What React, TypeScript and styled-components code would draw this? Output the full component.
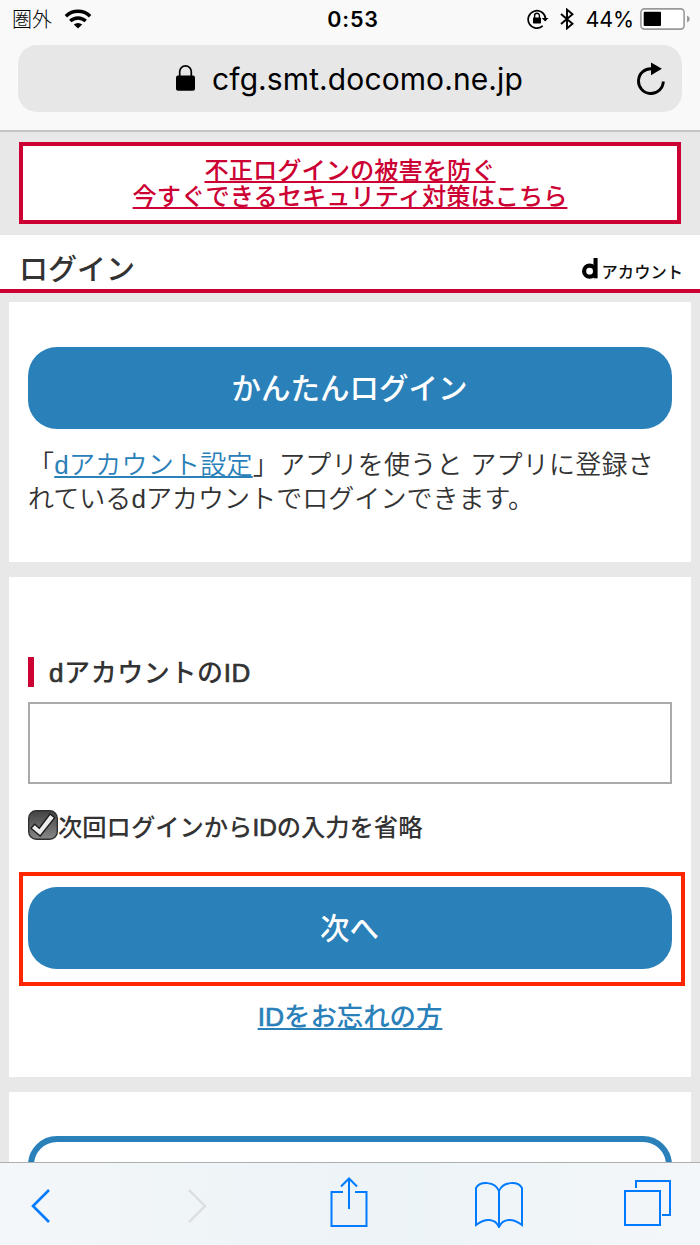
import React from 'react';
import styled, { createGlobalStyle } from 'styled-components';

const BLUE = '#2a80b9';
const CRIMSON = '#cc0033';
const IOS_BLUE = '#007aff';

const GlobalStyle = createGlobalStyle`
  * { box-sizing: border-box; }
  body {
    margin: 0;
    background: #e8e8e8;
    color: #333;
    font-family: 'Liberation Sans', 'Noto Sans CJK JP', sans-serif;
  }
`;

const Screen = styled.div`
  width: 700px;
  height: 1245px;
  display: flex;
  flex-direction: column;
  overflow: hidden;
`;

const BrowserTop = styled.header`
  flex: none;
  height: 132px;
  padding: 0 18px;
  background: #f9f9f9;
  border-bottom: 2px solid #c3c5c4;
`;

const StatusBar = styled.div`
  display: grid;
  grid-template-columns: 1fr auto 1fr;
  align-items: center;
  height: 38px;
  margin: 0 -8px 7px -6px;
  color: #000;
  font-family: Inter, 'Noto Sans CJK JP', sans-serif;
`;

const StatusGroup = styled.div<{ $end?: boolean }>`
  display: flex;
  align-items: center;
  justify-content: ${(p) => (p.$end ? 'flex-end' : 'flex-start')};
`;

const Carrier = styled.span`
  margin-right: 12px;
  font-family: 'Noto Sans CJK JP', sans-serif;
  font-size: 20px;
  font-weight: 300;
  line-height: 38px;
`;

const Clock = styled.time`
  font-size: 21.5px;
  font-weight: 600;
  letter-spacing: 0.8px;
  margin-left: 4px;
`;

const Percent = styled.span`
  margin: 0 6px 0 11px;
  font-size: 21.5px;
  letter-spacing: -0.1px;
`;

const AddressBar = styled.div`
  display: grid;
  grid-template-columns: 64px 1fr 64px;
  align-items: center;
  height: 67px;
  border-radius: 19px;
  background: #e7e7e7;
`;

const Address = styled.div`
  grid-column: 2;
  display: flex;
  align-items: center;
  justify-content: center;
  gap: 17px;
  padding-right: 1px;
  color: #000;
  font-family: Inter, sans-serif;
  font-size: 30px;
  white-space: nowrap;
`;

const Host = styled.span`
  letter-spacing: 0.1px;
`;

const ReloadButton = styled.button`
  justify-self: end;
  display: flex;
  margin-right: 17px;
  padding: 0;
  border: 0;
  background: none;
`;

const Page = styled.main`
  flex: 1;
  min-height: 0;
  overflow: hidden;
`;

const Notice = styled.a`
  display: block;
  height: 82px;
  margin: 10px 19px 11px;
  padding-top: 10px;
  border: 4px solid ${CRIMSON};
  background: #fff;
  color: ${CRIMSON};
  font-family: 'Noto Sans CJK JP', sans-serif;
  font-size: 24.25px;
  font-weight: 500;
  line-height: 26px;
  text-align: center;
  text-decoration: underline;
  text-decoration-thickness: 1.5px;
  text-underline-offset: 2px;
  text-decoration-skip-ink: none;
`;

const TitleBar = styled.div`
  display: flex;
  align-items: center;
  justify-content: space-between;
  height: 58px;
  padding: 9px 17px 0 19px;
  border-bottom: 4px solid ${CRIMSON};
  background: #fff;
`;

const Title = styled.h1`
  margin: 0;
  font-family: 'Noto Sans CJK JP', sans-serif;
  font-size: 29px;
  font-weight: 500;
  line-height: 44px;
`;

const Brand = styled.div`
  display: flex;
  align-items: flex-start;
  gap: 4px;
  margin-top: 9px;
  color: #111;
  font-family: 'Noto Sans CJK JP', sans-serif;
  font-size: 16.3px;
  font-weight: 500;
  line-height: 26px;
`;

const Cards = styled.div`
  padding-top: 9px;
`;

const Card = styled.section<{ $height: number; $top: number }>`
  height: ${(p) => p.$height}px;
  margin: 0 9px 15px;
  padding: ${(p) => p.$top}px 19px 0;
  background: #fff;
`;

const PrimaryButton = styled.button`
  display: flex;
  align-items: center;
  justify-content: center;
  width: 100%;
  height: 82px;
  padding: 0 1px 5px 0;
  border: 0;
  border-radius: 29px;
  background: ${BLUE};
  color: #fff;
  font-family: 'Noto Sans CJK JP', sans-serif;
  font-size: 29.5px;
  font-weight: 500;
`;

const OutlineButton = styled.button`
  display: block;
  width: 100%;
  height: 82px;
  border: 6px solid ${BLUE};
  border-radius: 29px;
  background: #fff;
`;

const Description = styled.p`
  margin: 20px 0 0;
  font-size: 26px;
  font-weight: 350;
  line-height: 33.5px;
  white-space: nowrap;
`;

const Line = styled.span<{ $tracking: number }>`
  display: block;
  letter-spacing: ${(p) => p.$tracking}px;
`;

const Latin = styled.span<{ $heavy?: boolean }>`
  font-family: 'Liberation Sans', sans-serif;
  font-weight: 400;
  -webkit-text-stroke: ${(p) => (p.$heavy ? '0.7px currentColor' : '0')};
`;

const TextLink = styled.a`
  color: ${BLUE};
  text-decoration: underline;
  text-decoration-thickness: 2px;
  text-underline-offset: 2px;
  text-decoration-skip-ink: none;
`;

const FieldLabel = styled.label`
  display: flex;
  align-items: center;
  height: 30px;
  padding: 0 0 4px 15px;
  border-left: 6px solid ${CRIMSON};
  font-size: 26px;
  font-weight: 500;
  letter-spacing: 0.6px;
  white-space: nowrap;
`;

const TextField = styled.input`
  display: block;
  width: 100%;
  height: 82px;
  margin: 15px 0 26px;
  padding: 0 16px;
  border: 2px solid #aaa;
  border-radius: 0;
  background: #fff;
  font-size: 25px;
  outline: none;
`;

const CheckRow = styled.label`
  display: flex;
  align-items: center;
  height: 30px;
  font-size: 24.3px;
  font-weight: 500;
  white-space: nowrap;
`;

const Highlight = styled.div`
  margin: 32px -13px 0 -9px;
  height: 114px;
  padding: 11px 9px 0 5px;
  border: 4px solid #ff2600;
`;

const Forgot = styled.div`
  margin-top: 11px;
  font-size: 26.4px;
  font-weight: 500;
  line-height: 40px;
  text-align: center;
`;

const Toolbar = styled.nav`
  flex: none;
  display: flex;
  align-items: flex-start;
  height: 83px;
  padding-left: 29px;
  border-top: 1px solid #adb0b2;
  background: linear-gradient(90deg, #f4f7fa, #eef4f7 35%, #edf4f7 60%, #f4f7fa);
`;

const ToolIcon = styled.svg<{ $muted?: boolean; $gap?: number; $top: number }>`
  display: block;
  flex: none;
  margin: ${(p) => p.$top}px 0 0 ${(p) => p.$gap ?? 0}px;
  fill: none;
  stroke: ${(p) => (p.$muted ? '#dcdddf' : IOS_BLUE)};
  stroke-width: ${(p) => (p.$muted ? 2.4 : 2)};
`;

const WifiIcon = () => (
  <svg width="28" height="20" viewBox="0 0 28 20">
    <g fill="none" stroke="#000" strokeWidth="3.5">
      <path d="M1.9 7.2A17.5 17.5 0 0 1 26.1 7.2" />
      <path d="M6.3 12A11.2 11.2 0 0 1 21.7 12" />
    </g>
    <path d="M9.8 15.6A6 6 0 0 1 18.2 15.6L14 19.4Z" />
  </svg>
);

const RotationLockIcon = () => (
  <svg width="22" height="20" viewBox="0 0 22 20">
    <path d="M15.7 16.9A8.7 8.7 0 1 1 18.5 9.4" fill="none" stroke="#000" strokeWidth="1.7" />
    <path d="M14.7 9H21.5L18.2 12.6Z" />
    <rect x="6" y="8.5" width="8" height="6" rx=".7" />
    <path d="M7.6 9V6.7a2.4 2.4 0 0 1 4.8 0V9" fill="none" stroke="#000" strokeWidth="1.4" />
  </svg>
);

const BluetoothIcon = () => (
  <svg width="14" height="22" viewBox="0 0 14 22" style={{ marginLeft: 11 }}>
    <path d="M1 6L12.5 15.8L7 20.4V1.6L12.5 6.2L1 16" fill="none" stroke="#000" strokeWidth="1.9" />
  </svg>
);

const BatteryIcon = () => (
  <svg width="50" height="22" viewBox="0 0 50 22">
    <rect x=".9" y=".9" width="43.2" height="20.2" rx="3.5" fill="#fff" stroke="#999" strokeWidth="1.6" />
    <rect x="3.7" y="3.8" width="17.3" height="14.2" rx="1" />
    <path d="M47 7.4q2.8 1 2.8 3.6T47 14.6Z" fill="#999" />
  </svg>
);

const LockIcon = () => (
  <svg width="19" height="28" viewBox="0 0 19 28">
    <rect y="10.5" width="19" height="15.3" rx="2" />
    <path d="M3.7 11.5V6.7a5.8 5.8 0 0 1 11.6 0v4.8" fill="none" stroke="#000" strokeWidth="1.7" />
  </svg>
);

const ReloadIcon = () => (
  <svg width="28" height="34" viewBox="0 0 28 34">
    <path d="M26.3 19.5A12.4 12.4 0 1 1 15 6.8" fill="none" stroke="#000" strokeWidth="2.9" />
    <path d="M14 .4L24.9 6.8L14 13.3Z" />
  </svg>
);

const BrandMark = () => (
  <svg width="16" height="21" viewBox="0 0 16 21">
    <circle cx="7.6" cy="13.2" r="5.5" fill="none" stroke="#000" strokeWidth="4.2" />
    <path d="M11.5 0H15.6V20.3H11.5Z" />
  </svg>
);

const CheckIcon = () => (
  <svg width="30" height="30" viewBox="0 0 30 30">
    <defs>
      <linearGradient id="box" x2="0" y2="1">
        <stop stopColor="#424242" />
        <stop offset="1" stopColor="#888" />
      </linearGradient>
    </defs>
    <rect x=".7" y=".7" width="28.6" height="28.6" rx="7.5" fill="url(#box)" stroke="#303030" strokeWidth="1.4" />
    <path d="M3 18.2L6.7 14.2L11.3 18.2L22 4L26.7 7.7L12.2 26Z" fill="#eee" stroke="#1d1d1d" strokeWidth="1.4" />
  </svg>
);

export default function App() {
  return (
    <>
      <GlobalStyle />
      <Screen>
        <BrowserTop>
          <StatusBar>
            <StatusGroup>
              <Carrier>圏外</Carrier>
              <WifiIcon />
            </StatusGroup>
            <Clock>0:53</Clock>
            <StatusGroup $end>
              <RotationLockIcon />
              <BluetoothIcon />
              <Percent>44%</Percent>
              <BatteryIcon />
            </StatusGroup>
          </StatusBar>
          <AddressBar>
            <Address>
              <LockIcon />
              <Host>cfg.smt.docomo.ne.jp</Host>
            </Address>
            <ReloadButton>
              <ReloadIcon />
            </ReloadButton>
          </AddressBar>
        </BrowserTop>

        <Page>
          <Notice>
            不正ログインの被害を防ぐ
            <br />
            今すぐできるセキュリティ対策はこちら
          </Notice>
          <TitleBar>
            <Title>ログイン</Title>
            <Brand>
              <BrandMark />
              アカウント
            </Brand>
          </TitleBar>
          <Cards>
            <Card $height={260} $top={45}>
              <PrimaryButton>かんたんログイン</PrimaryButton>
              <Description>
                <Line $tracking={0.25}>
                  「<TextLink><Latin>d</Latin>アカウント設定</TextLink>」アプリを使うと アプリに登録さ
                </Line>
                <Line $tracking={0.05}>
                  れている<Latin>d</Latin>アカウントでログインできます。
                </Line>
              </Description>
            </Card>
            <Card $height={500} $top={80}>
              <FieldLabel htmlFor="account-id">
                <span>
                  <Latin $heavy>d</Latin>アカウントの<Latin $heavy>ID</Latin>
                </span>
              </FieldLabel>
              <TextField id="account-id" />
              <CheckRow>
                <CheckIcon />
                <span>
                  次回ログインから<Latin $heavy>ID</Latin>の入力を省略
                </span>
              </CheckRow>
              <Highlight>
                <PrimaryButton>次へ</PrimaryButton>
              </Highlight>
              <Forgot>
                <TextLink><Latin $heavy>ID</Latin>をお忘れの方</TextLink>
              </Forgot>
            </Card>
            <Card $height={200} $top={44}>
              <OutlineButton />
            </Card>
          </Cards>
        </Page>

        <Toolbar>
          <ToolIcon $top={25} width="22" height="36" viewBox="0 0 22 36">
            <path d="M20 2L4 18L20 34" strokeWidth="2.6" />
          </ToolIcon>
          <ToolIcon $muted $top={25} $gap={136} width="22" height="36" viewBox="0 0 22 36">
            <path d="M2 2L18 18L2 34" />
          </ToolIcon>
          <ToolIcon $top={14} $gap={121} width="38" height="50" viewBox="0 0 38 50">
            <path d="M13 15H1.5V49H36.5V15H25M19 32V2M11 9.5L19 1.5L27 9.5" />
          </ToolIcon>
          <ToolIcon $top={19} $gap={107} width="48" height="46" viewBox="0 0 48 46">
            <path d="M24 45V9C20-1 5-1 1 6V43C10 36 20 36 24 45C28 36 38 36 47 43V6C43-1 28-1 24 9" />
          </ToolIcon>
          <ToolIcon $top={16} $gap={101} width="47" height="47" viewBox="0 0 47 47">
            <path d="M1 12H36V46H1ZM12 9V2H46V36H38" />
          </ToolIcon>
        </Toolbar>
      </Screen>
    </>
  );
}
